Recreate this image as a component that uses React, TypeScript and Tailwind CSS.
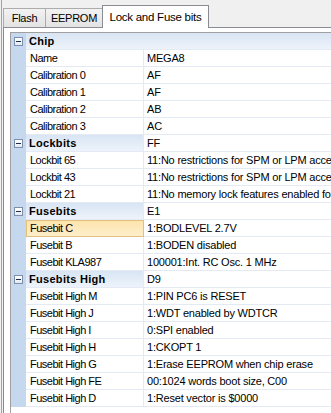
import React from "react"

type Row = { label: string; value?: string; header?: boolean; selected?: boolean }

const rows: Row[] = [
  { label: "Chip", header: true },
  { label: "Name", value: "MEGA8" },
  { label: "Calibration 0", value: "AF" },
  { label: "Calibration 1", value: "AF" },
  { label: "Calibration 2", value: "AB" },
  { label: "Calibration 3", value: "AC" },
  { label: "Lockbits", value: "FF", header: true },
  { label: "Lockbit 65", value: "11:No restrictions for SPM or LPM access" },
  { label: "Lockbit 43", value: "11:No restrictions for SPM or LPM access" },
  { label: "Lockbit 21", value: "11:No memory lock features enabled for" },
  { label: "Fusebits", value: "E1", header: true },
  { label: "Fusebit C", value: "1:BODLEVEL 2.7V", selected: true },
  { label: "Fusebit B", value: "1:BODEN disabled" },
  { label: "Fusebit KLA987", value: "100001:Int. RC Osc. 1 MHz" },
  { label: "Fusebits High", value: "D9", header: true },
  { label: "Fusebit High M", value: "1:PIN PC6 is RESET" },
  { label: "Fusebit High J", value: "1:WDT enabled by WDTCR" },
  { label: "Fusebit High I", value: "0:SPI enabled" },
  { label: "Fusebit High H", value: "1:CKOPT 1" },
  { label: "Fusebit High G", value: "1:Erase EEPROM when chip erase" },
  { label: "Fusebit High FE", value: "00:1024 words boot size, C00" },
  { label: "Fusebit High D", value: "1:Reset vector is $0000" },
]

function MinusBox() {
  return (
    <div className="w-[9px] h-[9px] border border-[#7d8fab] bg-gradient-to-b from-white to-[#e4ebf5] flex items-center justify-center">
      <div className="w-[5px] h-px bg-[#1f2d45]" />
    </div>
  )
}

function GridRow({ row }: { row: Row }) {
  if (row.header && !row.value) {
    return (
      <div className="flex h-[17px]">
        <div className="w-[15px] bg-[#c6d8ee] flex items-center justify-center">
          <MinusBox />
        </div>
        <div className="flex-1 bg-gradient-to-b from-[#d9e5f4] to-[#edf3fa] border-b border-[#e4eaf3] flex items-center pl-[3px] font-bold tracking-[0.3px]">
          {row.label}
        </div>
      </div>
    )
  }
  if (row.header) {
    return (
      <div className="flex h-[17px]">
        <div className="w-[15px] bg-[#c6d8ee] flex items-center justify-center">
          <MinusBox />
        </div>
        <div className="w-[118px] bg-gradient-to-b from-[#d9e5f4] to-[#edf3fa] border-b border-r border-[#e4eaf3] flex items-center pl-[3px] font-bold tracking-[0.3px]">
          {row.label}
        </div>
        <div className="flex-1 border-b border-[#e4eaf3] flex items-center pl-[3px] whitespace-nowrap overflow-hidden tracking-[-0.2px]">
          {row.value}
        </div>
      </div>
    )
  }
  return (
    <div className="flex h-[17px]">
      <div className="w-[15px] bg-[#c6d8ee]" />
      <div
        className={
          row.selected
            ? "w-[118px] bg-gradient-to-b from-[#fde4ad] to-[#fdeecb] border border-[#e3bf7d] flex items-center pl-[3px]"
            : "w-[118px] border-b border-r border-[#e4eaf3] flex items-center pl-1"
        }
      >
        {row.label}
      </div>
      <div className="flex-1 border-b border-[#e4eaf3] flex items-center pl-[3px] whitespace-nowrap overflow-hidden tracking-[-0.2px]">
        {row.value}
      </div>
    </div>
  )
}

export default function App() {
  return (
    <div
      className="w-[331px] h-[413px] bg-[#f0f0f0] overflow-hidden pl-px text-[11px] tracking-[-0.5px] text-black"
      style={{ fontFamily: '"Liberation Sans", Arial, sans-serif' }}
    >
      <div className="h-full border-l border-[#a3a3a3] flex flex-col w-[380px]">
        <div className="h-[27px] flex items-end pl-px tracking-[-0.25px]">
          <div className="w-[43px] h-[19px] border border-b-0 border-[#acacac] bg-gradient-to-b from-[#f2f2f2] to-[#e3e3e3] flex items-center justify-center">
            Flash
          </div>
          <div className="w-[58px] h-[19px] -ml-px border border-b-0 border-[#acacac] bg-gradient-to-b from-[#f2f2f2] to-[#e3e3e3] flex items-center justify-center">
            EEPROM
          </div>
          <div className="relative z-10 w-[107px] h-[23px] -ml-px -mb-px border border-b-0 border-[#898c95] bg-white flex items-start justify-center pt-[3px] text-[11.5px]">
            Lock and Fuse bits
          </div>
        </div>
        <div className="flex-1 ml-px bg-white border-l border-t border-[#898c95] pl-[6px] pt-[4px]">
          <div className="h-full border-l border-t border-[#a0a0a0]">
            {rows.map((r) => (
              <GridRow key={r.label} row={r} />
            ))}
          </div>
        </div>
      </div>
    </div>
  )
}
